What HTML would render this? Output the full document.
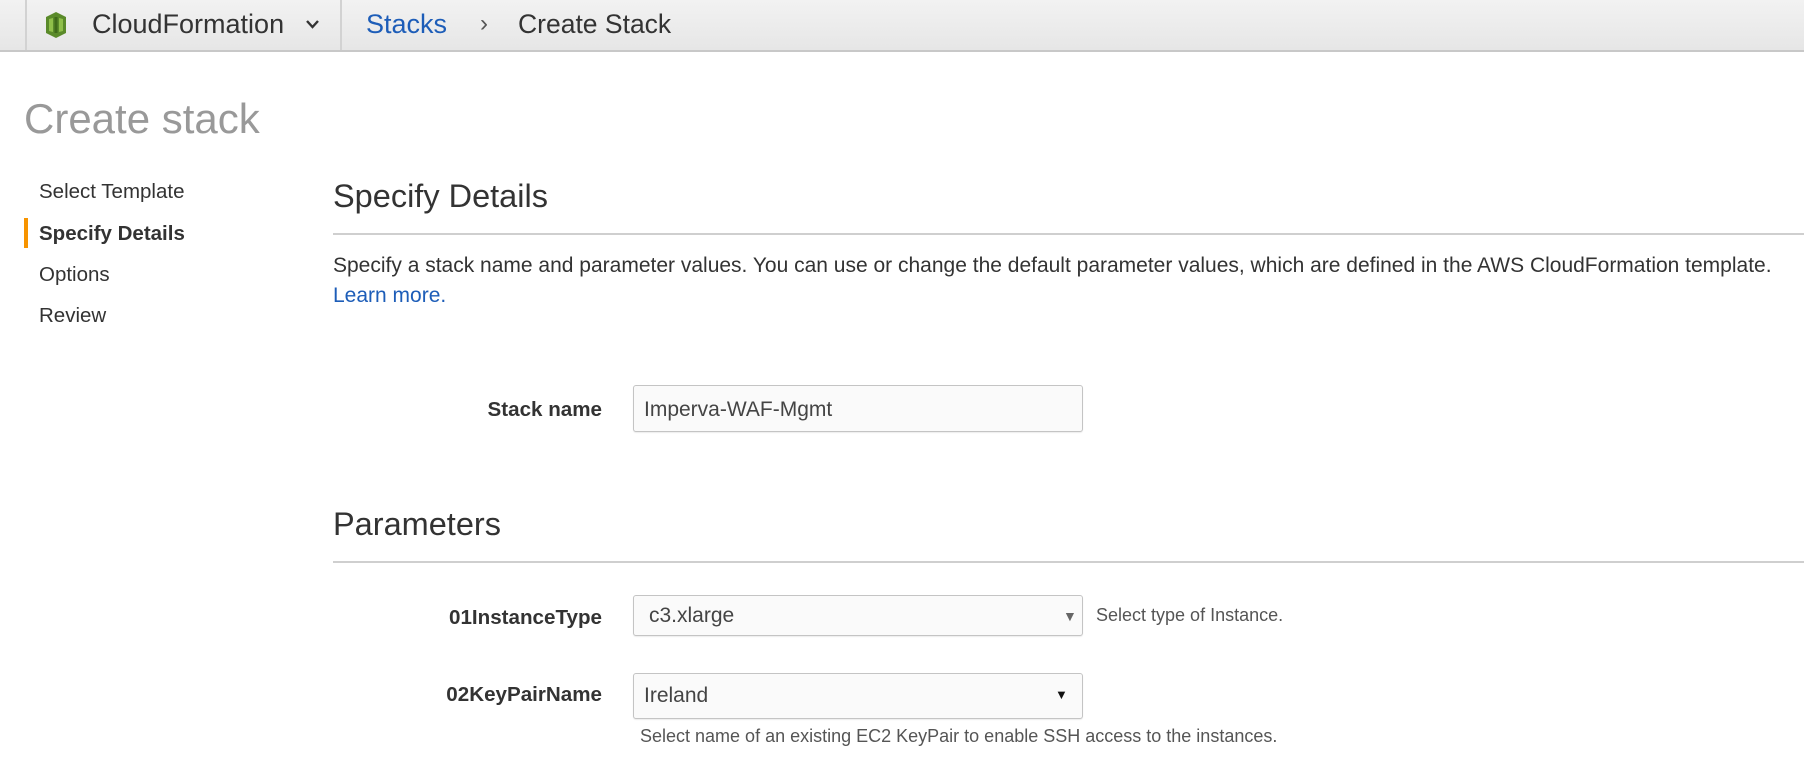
<!DOCTYPE html>
<html><head><meta charset="utf-8"><style>
*{margin:0;padding:0;box-sizing:border-box}
body{width:1804px;height:766px;overflow:hidden;background:#fff;font-family:"Liberation Sans",Arial,sans-serif;position:relative;color:#333}
.t{position:absolute;white-space:nowrap;line-height:1}
.hdr{position:absolute;left:0;top:0;width:1804px;height:52px;background:linear-gradient(#f2f2f2,#e6e6e6);border-bottom:2px solid #c8c8c8}
.sep{position:absolute;top:0;width:2px;height:50px;background:#d2d2d2}
.box{position:absolute;border:1px solid #c4c4c4;border-radius:3px;background:#fafafa;box-shadow:0 1px 1px rgba(0,0,0,.08)}
.hr{position:absolute;left:333px;right:0;height:2px;background:#cfcfcf}
.lbl{position:absolute;right:1202px;font-weight:bold;font-size:20.6px;line-height:1;white-space:nowrap;color:#333}
</style></head><body>
<div class="hdr"></div>
<div class="sep" style="left:25px"></div>
<div class="sep" style="left:340px"></div>
<svg style="position:absolute;left:46px;top:12px" width="20" height="26" viewBox="0 0 20 26">
<polygon points="0,5 10,0 20,5 20,21 10,26 0,21" fill="#5a8a2a"/>
<polygon points="3,7 7,6 7,20 3,19" fill="#8fbf4a"/>
<polygon points="13,6 17,7 17,19 13,20" fill="#8fbf4a"/>
<rect x="8.5" y="5" width="3" height="16" fill="#3f6a1a"/>
</svg>
<div class="t" style="left:92px;top:11px;font-size:27px;color:#333">CloudFormation</div>
<svg style="position:absolute;left:305px;top:19px" width="15" height="10" viewBox="0 0 15 10"><path d="M2 2 L7.5 8 L13 2" fill="none" stroke="#333" stroke-width="2.4"/></svg>
<div class="t" style="left:366px;top:11px;font-size:27px;color:#1d5db8">Stacks</div>
<div class="t" style="left:480px;top:12px;font-size:24px;color:#555">›</div>
<div class="t" style="left:518px;top:11px;font-size:26.5px;color:#333">Create Stack</div>

<div class="t" style="left:24px;top:98px;font-size:42px;color:#999">Create stack</div>

<div class="t" style="left:39px;top:182px;font-size:20.5px">Select Template</div>
<div style="position:absolute;left:24px;top:218px;width:4px;height:30px;background:#f79400"></div>
<div class="t" style="left:39px;top:224px;font-size:20.5px;font-weight:bold">Specify Details</div>
<div class="t" style="left:39px;top:265px;font-size:20.5px">Options</div>
<div class="t" style="left:39px;top:306px;font-size:20.5px">Review</div>

<div class="t" style="left:333px;top:180px;font-size:32.5px;color:#333">Specify Details</div>
<div class="hr" style="top:233px"></div>
<div class="t" style="left:333px;top:255px;font-size:21px">Specify a stack name and parameter values. You can use or change the default parameter values, which are defined in the AWS CloudFormation template.</div>
<div class="t" style="left:333px;top:285px;font-size:21px;color:#1d5db8">Learn more.</div>

<div class="lbl" style="top:400px">Stack name</div>
<div class="box" style="left:633px;top:385px;width:450px;height:47px"></div>
<div class="t" style="left:644px;top:399px;font-size:21px;color:#444">Imperva-WAF-Mgmt</div>

<div class="t" style="left:333px;top:508px;font-size:32.5px;color:#333">Parameters</div>
<div class="hr" style="top:561px"></div>

<div class="lbl" style="top:608px">01InstanceType</div>
<div class="box" style="left:633px;top:595px;width:450px;height:41px"></div>
<div class="t" style="left:649px;top:605px;font-size:21px;color:#444">c3.xlarge</div>
<div class="t" style="left:1063px;top:609px;font-size:14px;color:#666">▼</div>
<div class="t" style="left:1096px;top:606px;font-size:18px;color:#555">Select type of Instance.</div>

<div class="lbl" style="top:685px">02KeyPairName</div>
<div class="box" style="left:633px;top:673px;width:450px;height:46px"></div>
<div class="t" style="left:644px;top:685px;font-size:21px;color:#444">Ireland</div>
<div class="t" style="left:1055px;top:688px;font-size:13px;color:#111">▼</div>
<div class="t" style="left:640px;top:727px;font-size:18px;color:#555">Select name of an existing EC2 KeyPair to enable SSH access to the instances.</div>
</body></html>
